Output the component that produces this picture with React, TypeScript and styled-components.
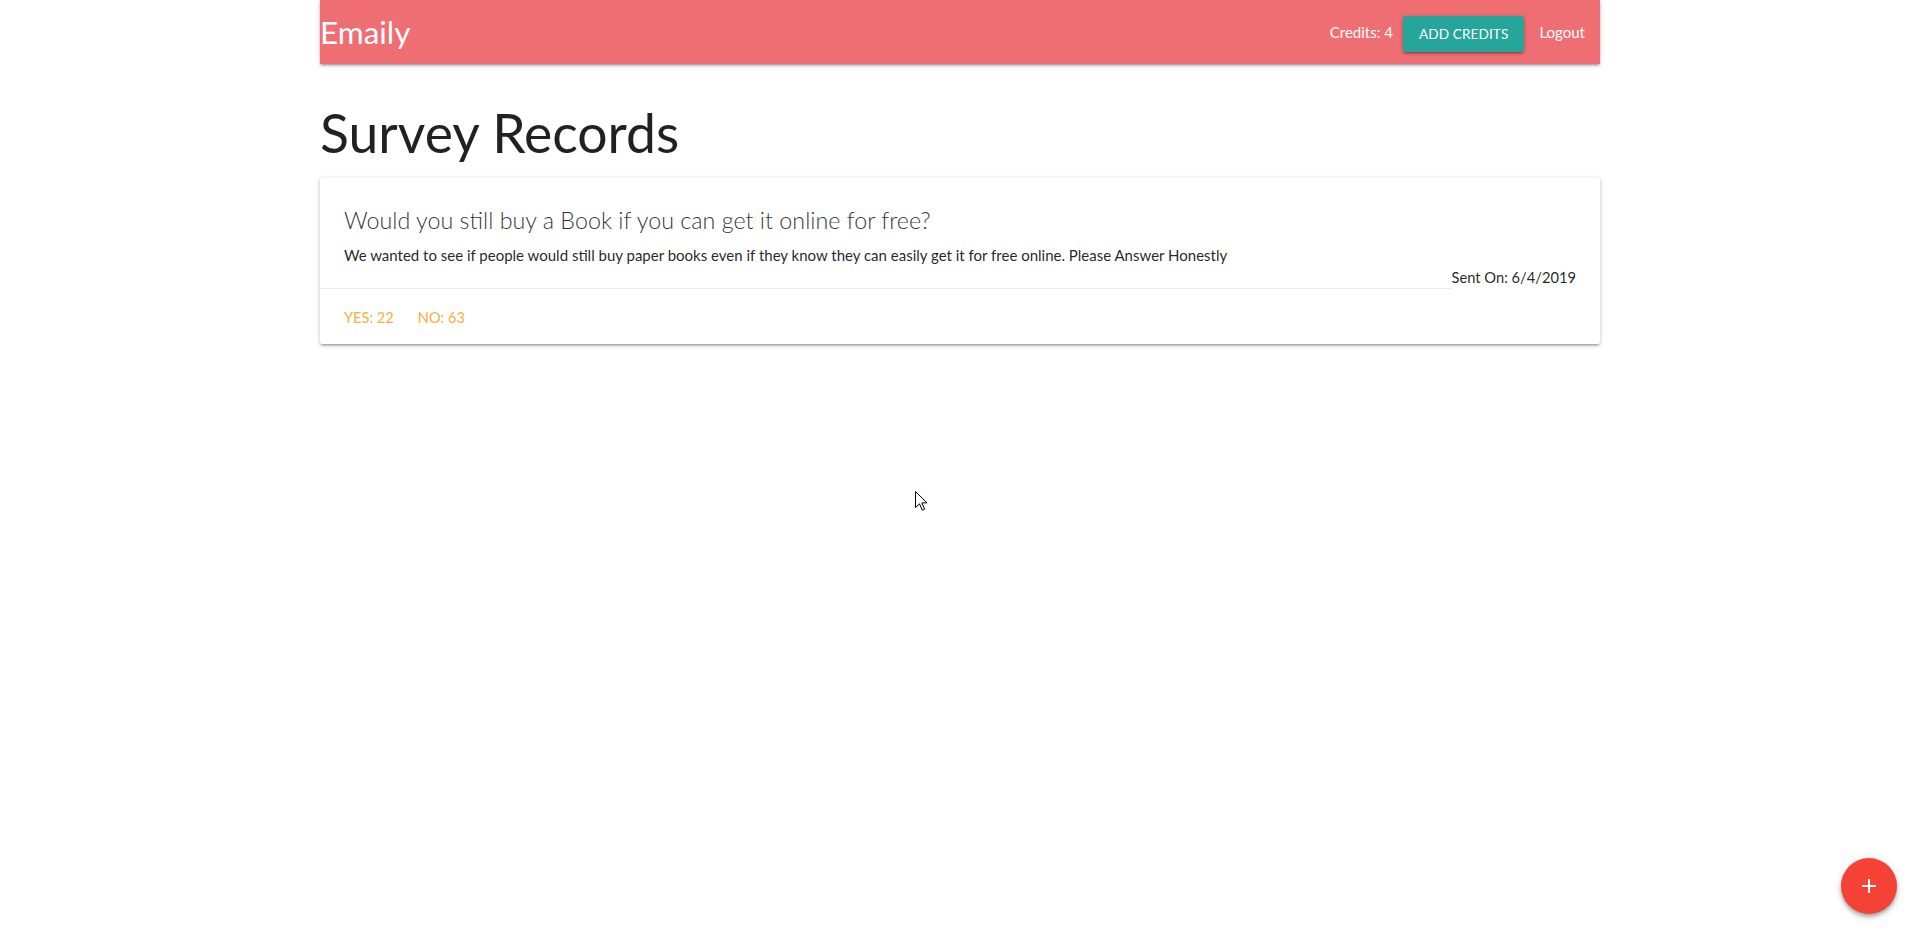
import React from 'react';
import styled, { createGlobalStyle } from 'styled-components';

const GlobalStyle = createGlobalStyle`
  html, body {
    margin: 0;
    padding: 0;
    background: #fff;
  }
  body {
    font-family: Lato, "Open Sans", Arial, sans-serif;
    font-size: 15px;
    line-height: 1.5;
    color: rgba(0, 0, 0, 0.87);
  }
  * {
    box-sizing: border-box;
  }
`;

const shadow = `0 2px 2px 0 rgba(0,0,0,0.14), 0 3px 1px -2px rgba(0,0,0,0.12), 0 1px 5px 0 rgba(0,0,0,0.2)`;

const Container = styled.div`
  width: 1280px;
  margin: 0 auto;
  padding-bottom: 16px;
`;

const Nav = styled.nav`
  height: 64px;
  background: #ef6e73;
  box-shadow: ${shadow};
  display: flex;
  align-items: center;
  justify-content: space-between;
  color: #fff;
`;

const Brand = styled.a`
  font-size: 31.5px;
  line-height: 64px;
  color: #fff;
  text-decoration: none;
`;

const NavList = styled.ul`
  display: flex;
  align-items: center;
  list-style: none;
  margin: 0;
  padding: 0;
  height: 64px;
`;

const NavItem = styled.li<{ $spaced?: boolean }>`
  font-size: 15px;
  line-height: 64px;
  margin: ${(p) => (p.$spaced ? '0 10px' : '0')};
`;

const NavLink = styled.a`
  display: block;
  padding: 0 15px;
  color: #fff;
  text-decoration: none;
  font-size: 15px;
  line-height: 64px;
`;

const AddCreditsButton = styled.button`
  display: block;
  height: 36px;
  margin-top: 4px;
  padding: 0 16px;
  border: none;
  border-radius: 2px;
  background: #26a69a;
  color: #fff;
  font-family: inherit;
  font-size: 13.6px;
  letter-spacing: 0.1px;
  text-transform: uppercase;
  box-shadow: ${shadow};
  cursor: pointer;
`;

const PageTitle = styled.h3`
  font-size: 53.5px;
  font-weight: 400;
  line-height: 64.7px;
  margin: 35.6px 0 13.7px;
  color: rgba(0, 0, 0, 0.87);
`;

const Card = styled.div`
  background: #fff;
  border-radius: 2px;
  box-shadow: ${shadow};
`;

const CardContent = styled.div`
  padding: 26px 24px 22px;
`;

const CardTitle = styled.span`
  display: block;
  font-size: 23.3px;
  font-weight: 300;
  line-height: 32px;
  margin-bottom: 8px;
  color: rgba(0, 0, 0, 0.82);
`;

const Description = styled.p`
  margin: 0;
  font-size: 15px;
  line-height: 22.5px;
`;

const SentOn = styled.p`
  margin: 0;
  float: right;
  font-size: 14.7px;
  line-height: 22.5px;
`;

const CardAction = styled.div`
  border-top: 1px solid rgba(160, 160, 160, 0.2);
  padding: 18px 24px 14px;
  display: flex;
`;

const ActionLink = styled.a`
  color: #ffab40;
  font-size: 14.6px;
  line-height: 22.5px;
  margin-right: 24px;
  text-decoration: none;
`;

const Fab = styled.a`
  position: fixed;
  right: 23px;
  bottom: 23px;
  width: 56px;
  height: 56px;
  border-radius: 50%;
  background: #f44336;
  display: flex;
  align-items: center;
  justify-content: center;
  box-shadow: 0 4px 5px 0 rgba(0,0,0,0.14), 0 1px 10px 0 rgba(0,0,0,0.12), 0 2px 4px -1px rgba(0,0,0,0.3);
`;

const Cursor = styled.svg`
  position: fixed;
  left: 915px;
  top: 491px;
  pointer-events: none;
`;

export default function App() {
  return (
    <>
      <GlobalStyle />
      <Container>
        <Nav>
          <Brand href="#">Emaily</Brand>
          <NavList>
            <NavItem $spaced>Credits: 4</NavItem>
            <NavItem>
              <AddCreditsButton>Add Credits</AddCreditsButton>
            </NavItem>
            <NavItem>
              <NavLink href="#">Logout</NavLink>
            </NavItem>
          </NavList>
        </Nav>
        <PageTitle>Survey Records</PageTitle>
        <Card>
          <CardContent>
            <CardTitle>Would you still buy a Book if you can get it online for free?</CardTitle>
            <Description>
              We wanted to see if people would still buy paper books even if they know they can easily get it for free online. Please Answer Honestly
            </Description>
            <SentOn>Sent On: 6/4/2019</SentOn>
          </CardContent>
          <CardAction>
            <ActionLink href="#">YES: 22</ActionLink>
            <ActionLink href="#">NO: 63</ActionLink>
          </CardAction>
        </Card>
      </Container>
      <Fab href="#">
        <svg width="24" height="24" viewBox="0 0 24 24" fill="#fff">
          <path d="M19 13h-6v6h-2v-6H5v-2h6V5h2v6h6v2z" />
        </svg>
      </Fab>
      <Cursor width="13" height="21" viewBox="0 0 13 21">
        <path d="M0.5 0.5 L0.5 16.5 L4.5 12.8 L7.2 19.2 L9.6 18.2 L6.9 11.9 L12 11.9 Z" fill="#fff" stroke="#000" strokeWidth="1" strokeLinejoin="round" />
      </Cursor>
    </>
  );
}
